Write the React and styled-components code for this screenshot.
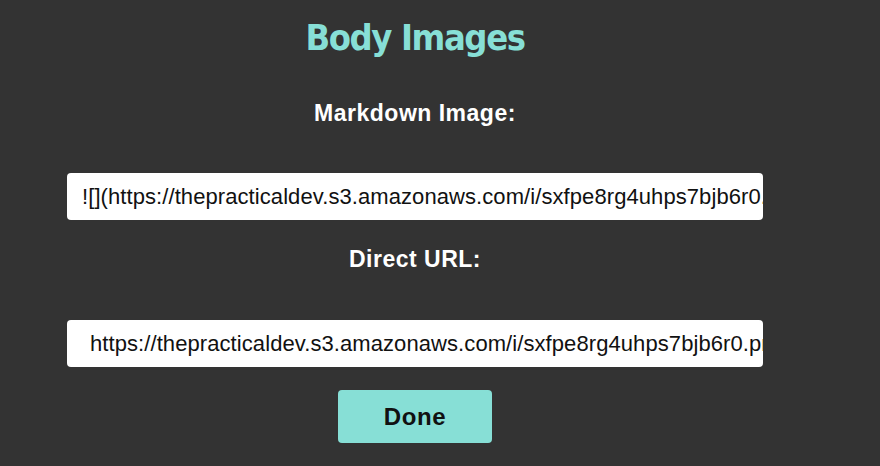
import React from "react";
import styled, { createGlobalStyle } from "styled-components";

const GlobalStyle = createGlobalStyle`
  html, body {
    margin: 0;
    padding: 0;
    background: #333333;
  }
  body {
    font-family: "Liberation Sans", Arial, sans-serif;
  }
`;

const Page = styled.div`
  width: 880px;
  height: 466px;
  background: #333333;
  overflow: hidden;
`;

const Column = styled.div`
  width: 830px;
  display: flex;
  flex-direction: column;
  align-items: center;
  padding-top: 16px;
`;

const Title = styled.h1`
  margin: 0;
  font-family: "DejaVu Sans Condensed", "DejaVu Sans", sans-serif;
  font-stretch: condensed;
  font-weight: 700;
  font-size: 36px;
  line-height: 44px;
  color: #87dfd6;
  letter-spacing: -1.4px;
`;

const Label = styled.div`
  font-family: "Liberation Sans", Arial, sans-serif;
  font-weight: 700;
  font-size: 23px;
  line-height: 28px;
  letter-spacing: 0.5px;
  color: #ffffff;
  margin-top: ${({ top }) => top}px;
  margin-bottom: ${({ bottom }) => bottom}px;
`;

const Field = styled.input`
  box-sizing: border-box;
  width: 696px;
  height: 47px;
  border: none;
  border-radius: 4px;
  background: #ffffff;
  padding: 0 0 0 ${({ indent }) => indent}px;
  font-family: "Liberation Sans", Arial, sans-serif;
  font-size: 22px;
  letter-spacing: 0.08px;
  color: #111111;
  outline: none;
`;

const DoneButton = styled.button`
  margin-top: 23px;
  width: 154px;
  height: 53px;
  border: none;
  border-radius: 4px;
  background: #87dfd6;
  color: #111111;
  font-family: "Liberation Sans", Arial, sans-serif;
  font-weight: 700;
  font-size: 24px;
  letter-spacing: 0.6px;
  cursor: pointer;
`;

export default function App() {
  return (
    <Page>
      <GlobalStyle />
      <Column>
        <Title>Body Images</Title>
        <Label top={39} bottom={46}>Markdown Image:</Label>
        <Field
          readOnly
          indent={15}
          value="![](https://thepracticaldev.s3.amazonaws.com/i/sxfpe8rg4uhps7bjb6r0.png)"
        />
        <Label top={25} bottom={47}>Direct URL:</Label>
        <Field
          readOnly
          indent={23}
          value="https://thepracticaldev.s3.amazonaws.com/i/sxfpe8rg4uhps7bjb6r0.png"
        />
        <DoneButton>Done</DoneButton>
      </Column>
    </Page>
  );
}
